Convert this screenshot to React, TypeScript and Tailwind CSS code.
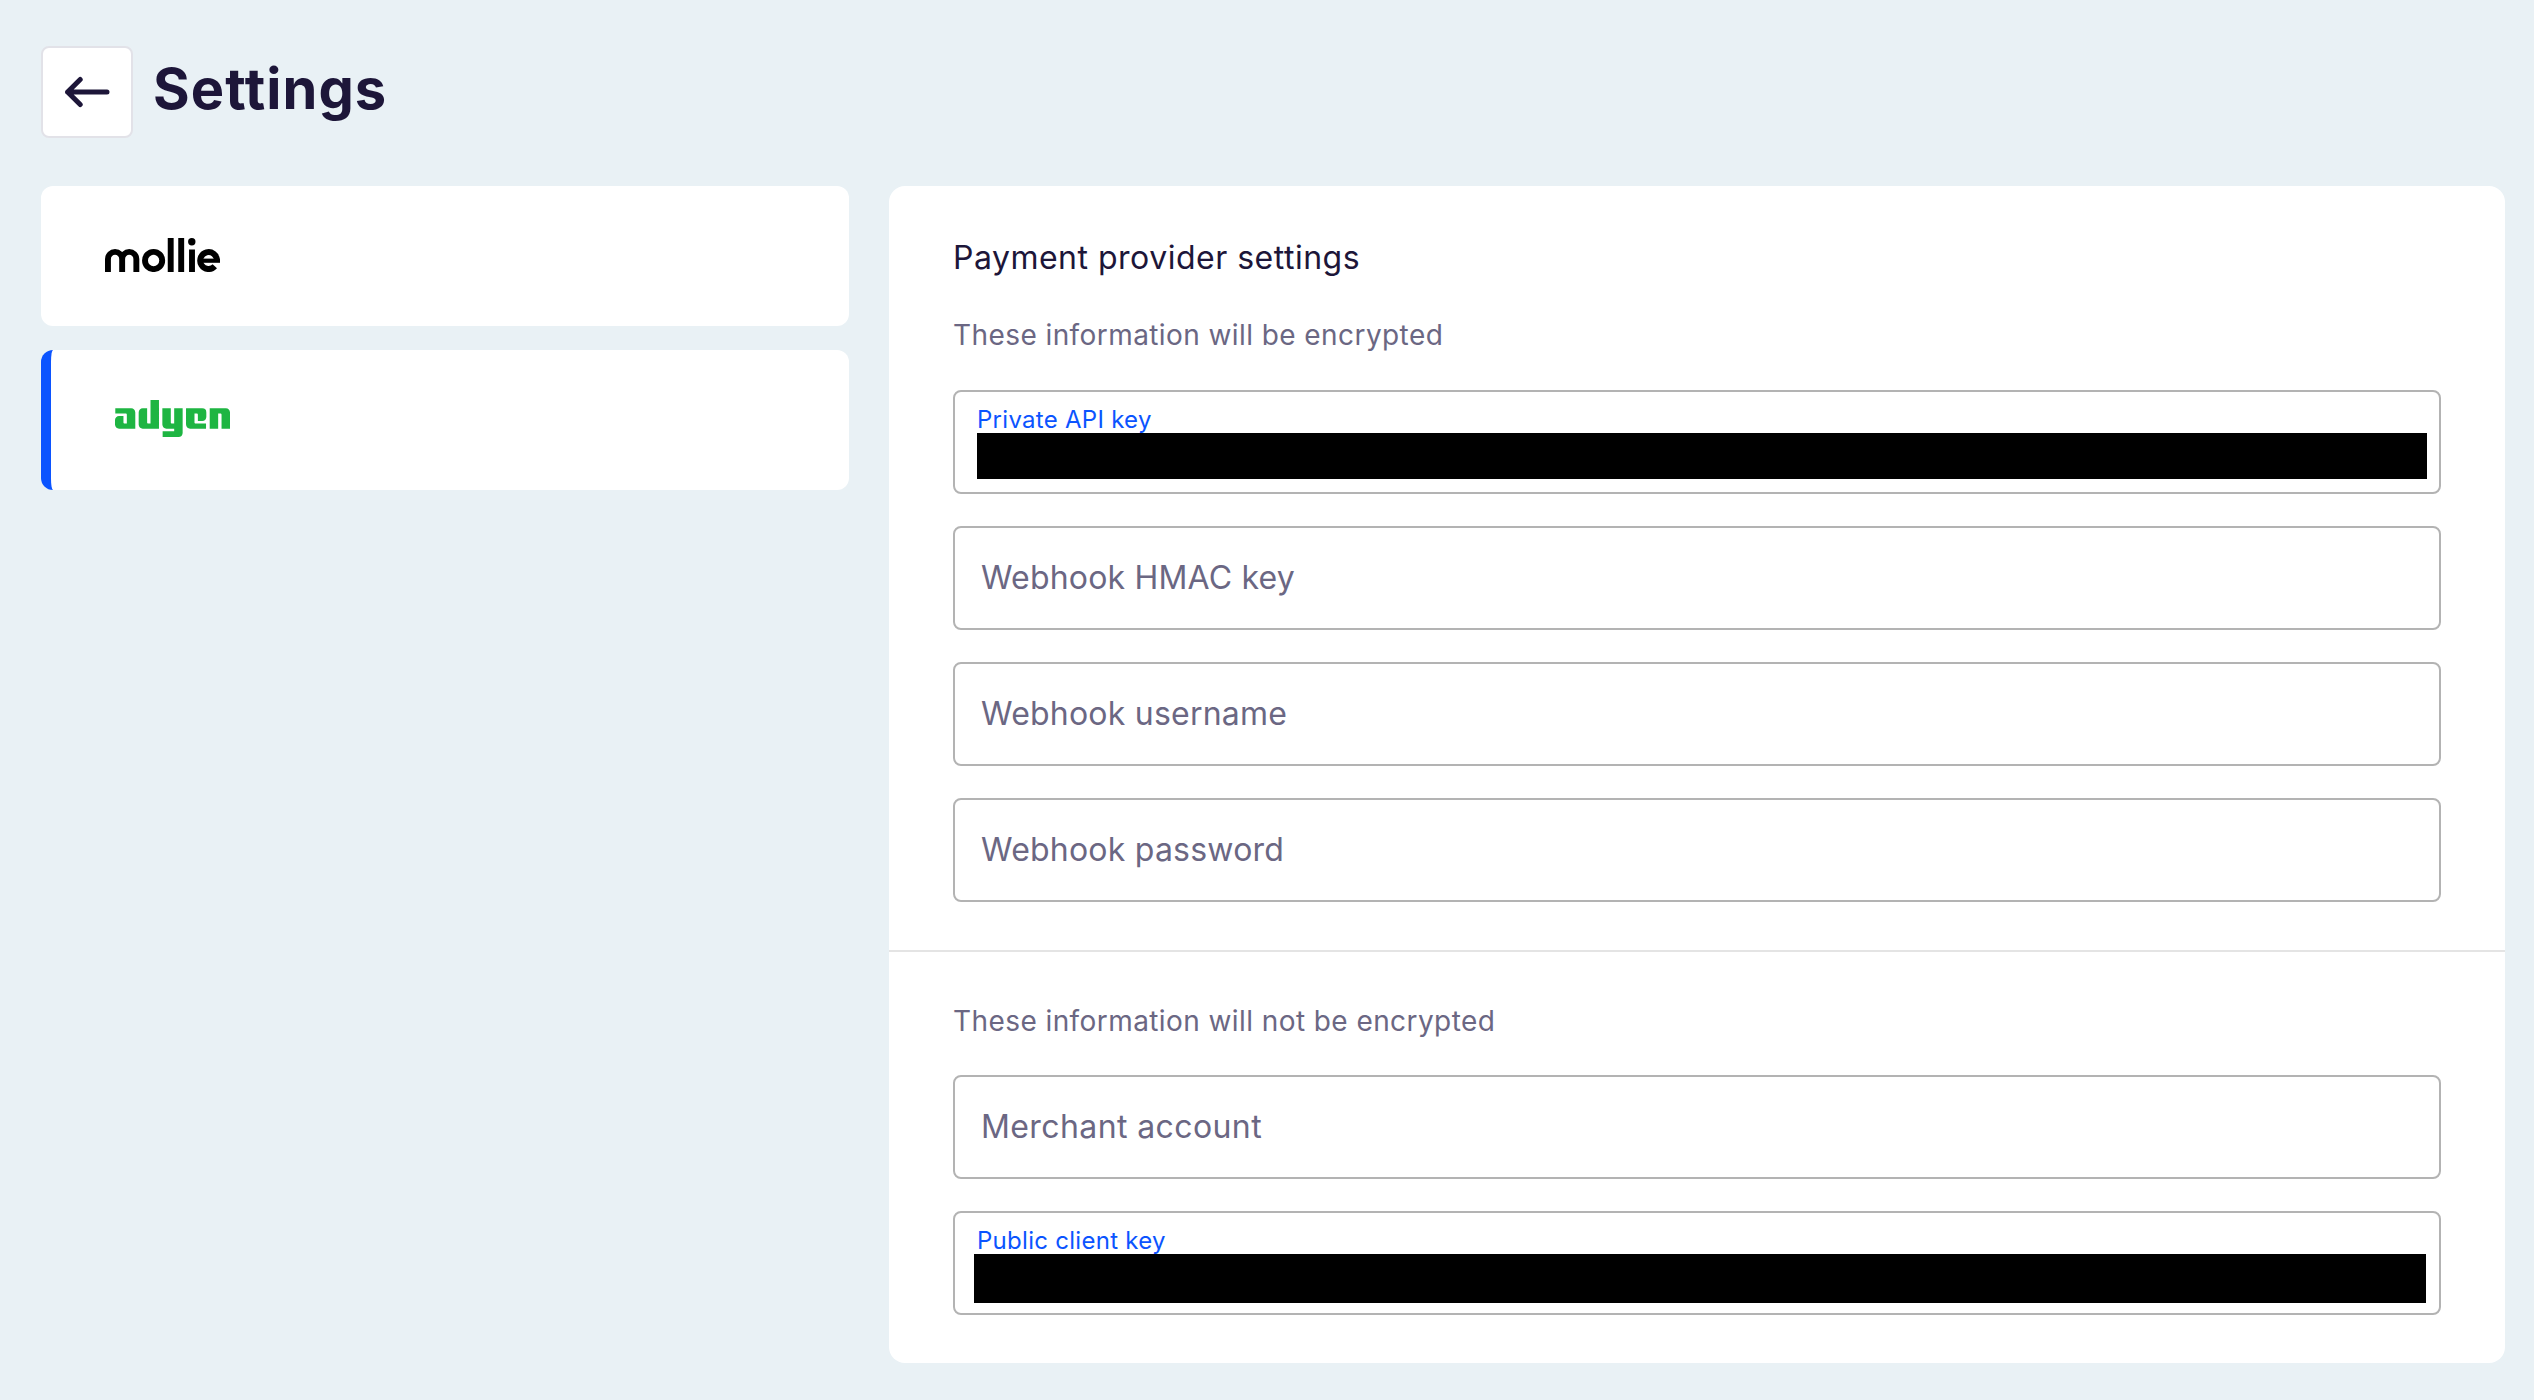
import { SiAdyen } from "react-icons/si";

function BackArrow() {
  return (
    <svg
      className="h-8 w-12"
      viewBox="0 0 48 32"
      fill="none"
      stroke="currentColor"
      strokeWidth="5"
      strokeLinecap="round"
      strokeLinejoin="round"
      aria-hidden="true"
    >
      <path d="M44 16H4.6M17.2 3.4 4.6 16 17.2 28.6" />
    </svg>
  );
}

function MollieLogo() {
  return (
    <svg className="h-[34px] w-[116px]" viewBox="0 0 116 34" fill="none" stroke="currentColor" strokeWidth="5.9" role="img" aria-label="mollie">
      <path d="M2.95 34V21a7 7 0 0 1 14.2 0V34M17.15 21a7 7 0 0 1 14.2 0V34" />
      <circle cx="48.6" cy="22.5" r="8.6" />
      <path d="M65.7 0V34M76.2 0V34M87 11.4V34" />
      <circle cx="86.8" cy="3.7" r="3.7" fill="currentColor" stroke="none" />
      <path d="M112 22.7a8.4 8.5 0 1 0 -2.2 5.6" />
      <path d="M96 22.7H115" strokeWidth="4.2" />
    </svg>
  );
}

function Field({ label, tracking }: { label: string; tracking: string }) {
  return (
    <div className="flex h-[104px] items-center rounded-lg border-2 border-[#b3b3b3] pb-px pl-[26px]">
      <span className={`text-[32px] leading-[46px] text-[#6b6783] ${tracking}`}>{label}</span>
    </div>
  );
}

function FilledField({ label, maskClass }: { label: string; maskClass: string }) {
  return (
    <div className="flex h-[104px] flex-col rounded-lg border-2 border-[#b3b3b3] pt-4">
      <span className="h-6 pl-[22px] text-[24px] leading-6 tracking-[0.28px] text-[#0b54ff]">{label}</span>
      <div className={`relative mt-px bg-black ${maskClass}`} />
    </div>
  );
}

export default function App() {
  return (
    <div className="min-h-screen bg-[#e9f1f5] pr-[29px] pl-[41px] pt-[46px] font-['Inter',sans-serif] text-[#1d1639]">
      <header className="flex h-[92px] items-start">
        <button className="flex h-[92px] w-[92px] items-center justify-center rounded-lg border-2 border-[#e2e2e8] bg-white" aria-label="Back">
          <BackArrow />
        </button>
        <h1 className="ml-5 text-[56px] leading-[86px] font-bold tracking-[1.05px]">Settings</h1>
      </header>

      <main className="mt-12 flex items-start gap-10">
        <nav className="flex w-[808px] flex-col gap-6">
          <div className="flex h-[140px] items-center rounded-xl bg-white pb-0.5 pl-16 text-black">
            <MollieLogo />
          </div>
          <div className="flex h-[140px] items-center rounded-xl border-l-[10px] border-[#0b54ff] bg-white pb-[3px] pl-16">
            <SiAdyen className="h-[115px] w-[115px] text-[#1eb542]" />
          </div>
        </nav>

        <section className="w-[1616px] rounded-2xl bg-white">
          <div className="border-b-2 border-[#e4e4e4] px-16 pt-[49px] pb-12">
            <h2 className="text-[32px] leading-[46px] tracking-[0.5px]">Payment provider settings</h2>
            <p className="mt-[33px] mb-[34px] text-[28px] leading-[42px] tracking-[0.42px] text-[#6b6783]">
              These information will be encrypted
            </p>
            <div className="flex flex-col gap-8">
              <FilledField label="Private API key" maskClass="ml-[22px] mr-3 h-[46px]" />
              <Field label="Webhook HMAC key" tracking="tracking-[0.18px]" />
              <Field label="Webhook username" tracking="tracking-[0.22px]" />
              <Field label="Webhook password" tracking="tracking-[0.22px]" />
            </div>
          </div>
          <div className="px-16 pt-12 pb-12">
            <p className="mb-[33px] text-[28px] leading-[42px] tracking-[0.42px] text-[#6b6783]">
              These information will not be encrypted
            </p>
            <div className="flex flex-col gap-8">
              <Field label="Merchant account" tracking="tracking-[0.4px]" />
              <FilledField label="Public client key" maskClass="ml-[19px] mr-[13px] h-[49px]" />
            </div>
          </div>
        </section>
      </main>
    </div>
  );
}
